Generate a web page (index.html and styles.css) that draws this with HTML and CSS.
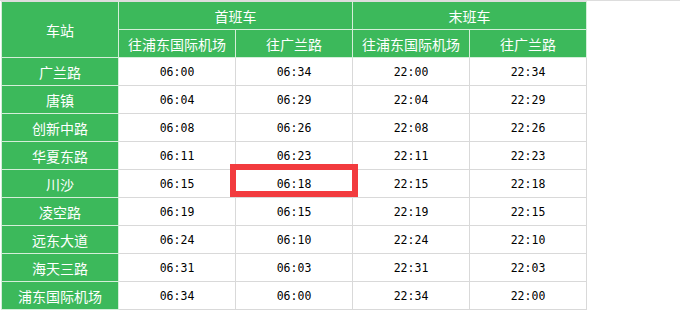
FILE: index.html
```html
<!DOCTYPE html>
<html lang="zh">
<head>
<meta charset="utf-8">
<link rel="stylesheet" href="styles.css">
</head>
<body>
<div class="page">
  <div class="wrap">
    <table class="timetable">
      <colgroup>
        <col class="c1"><col class="c"><col class="c"><col class="c"><col class="c">
      </colgroup>
      <thead>
        <tr>
          <th rowspan="2">车站</th>
          <th colspan="2">首班车</th>
          <th colspan="2">末班车</th>
        </tr>
        <tr>
          <th>往浦东国际机场</th>
          <th>往广兰路</th>
          <th>往浦东国际机场</th>
          <th>往广兰路</th>
        </tr>
      </thead>
      <tbody>
        <tr><th>广兰路</th><td>06:00</td><td>06:34</td><td>22:00</td><td>22:34</td></tr>
        <tr><th>唐镇</th><td>06:04</td><td>06:29</td><td>22:04</td><td>22:29</td></tr>
        <tr><th>创新中路</th><td>06:08</td><td>06:26</td><td>22:08</td><td>22:26</td></tr>
        <tr><th>华夏东路</th><td>06:11</td><td>06:23</td><td>22:11</td><td>22:23</td></tr>
        <tr><th>川沙</th><td>06:15</td><td class="hl">06:18<span class="mark"></span></td><td>22:15</td><td>22:18</td></tr>
        <tr><th>凌空路</th><td>06:19</td><td>06:15</td><td>22:19</td><td>22:15</td></tr>
        <tr><th>远东大道</th><td>06:24</td><td>06:10</td><td>22:24</td><td>22:10</td></tr>
        <tr><th>海天三路</th><td>06:31</td><td>06:03</td><td>22:31</td><td>22:03</td></tr>
        <tr><th>浦东国际机场</th><td>06:34</td><td>06:00</td><td>22:34</td><td>22:00</td></tr>
      </tbody>
    </table>
  </div>
</div>
</body>
</html>
```
FILE: styles.css
```css
html, body {
  margin: 0;
  padding: 0;
  background: #ffffff;
}
.page {
  width: 680px;
  height: 326px;
  border-top: 1px solid #dddddd;
  box-sizing: border-box;
}
.wrap {
  padding-left: 1px;
}
.timetable {
  border-collapse: collapse;
  table-layout: fixed;
  width: 586px;
  font-family: "Noto Sans CJK SC", "Noto Sans", sans-serif;
}
.timetable col.c1 { width: 117px; }
.timetable col.c { width: 117px; }
.timetable th,
.timetable td {
  height: 28px;
  padding: 0;
  text-align: center;
  vertical-align: middle;
  box-sizing: border-box;
}
.timetable th {
  background: #3cb95b;
  color: #ffffff;
  font-weight: normal;
  font-size: 14px;
  line-height: 16px;
  border: 1px solid #d4eed9;
}
.timetable td {
  color: #000000;
  font-family: "DejaVu Sans Mono", "Liberation Mono", monospace;
  font-size: 11.5px;
  border: 1px solid #d9d9d9;
}
.timetable thead tr:first-child th {
  border-top-color: #dddddd;
}
.timetable tbody th {
  border-left-color: #d4eed9;
}
.hl {
  position: relative;
}
.mark {
  position: absolute;
  left: -6px;
  top: -6px;
  width: 128px;
  height: 33px;
  border: 6px solid #f23b3e;
  box-sizing: border-box;
}
```
